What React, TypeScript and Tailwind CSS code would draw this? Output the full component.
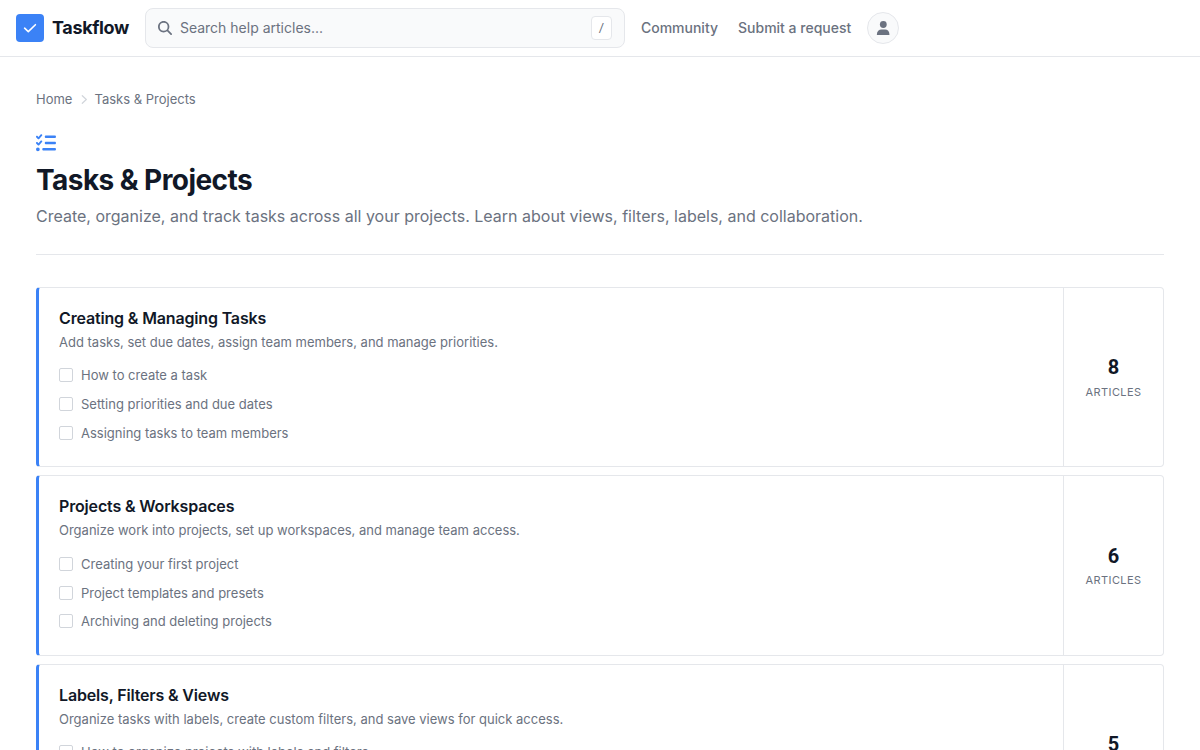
import { FaListCheck, FaMagnifyingGlass } from "react-icons/fa6";

const sections = [
  { title: "Creating & Managing Tasks", desc: "Add tasks, set due dates, assign team members, and manage priorities.", items: ["How to create a task", "Setting priorities and due dates", "Assigning tasks to team members"], count: 8 },
  { title: "Projects & Workspaces", desc: "Organize work into projects, set up workspaces, and manage team access.", items: ["Creating your first project", "Project templates and presets", "Archiving and deleting projects"], count: 6 },
  { title: "Labels, Filters & Views", desc: "Organize tasks with labels, create custom filters, and save views for quick access.", items: ["How to organize projects with labels and filters"], count: 5 },
];

export default function App() {
  return (
    <div className="h-[750px] overflow-hidden bg-white font-['Inter',sans-serif] text-[16px] text-[#111827]">
      <header className="flex h-[57px] items-center border-b border-[#e5e7eb] px-4">
        <a className="flex items-center gap-2">
          <span className="flex size-7 items-center justify-center rounded bg-[#3b82f6] text-white">
            <svg className="size-3.5" viewBox="0 0 14 14" fill="none" stroke="currentColor" strokeWidth="1.6" strokeLinecap="round" strokeLinejoin="round"><path d="M1.6 7.2 5.3 10.6 12.4 3.7" /></svg>
          </span>
          <span className="text-[18px] font-bold leading-[26px] tracking-[-0.36px]">Taskflow</span>
        </a>
        <div className="ml-4 flex h-10 w-[480px] items-center rounded-lg border border-[#e5e7eb] bg-[#f9fafb] px-3 text-[#6b7280]">
          <FaMagnifyingGlass className="size-3.5" />
          <span className="ml-2 flex-1 text-[14px] leading-5">Search help articles...</span>
          <span className="flex h-6 w-[21px] items-center justify-center rounded border border-[#e5e7eb] bg-white font-['Roboto',sans-serif] text-[13px]">/</span>
        </div>
        <nav className="ml-4 flex items-center gap-5 text-[14px] font-medium leading-5 text-[#6b7280]">
          <a>Community</a>
          <a>Submit a request</a>
        </nav>
        <span className="ml-4 flex size-8 items-center justify-center rounded-full border border-[#e5e7eb] bg-[#f9fafb] text-[#6b7280]">
          <svg className="size-3.5" viewBox="0 0 14 14" fill="currentColor"><circle cx="7.3" cy="3.5" r="3.4" /><path d="M.9 14v-.8C.9 10.5 3 8.6 5.5 8.6h3.6c2.5 0 4.3 1.9 4.3 4.6v.8Z" /></svg>
        </span>
      </header>
      <main className="px-9 pt-8">
        <div className="flex h-[21px] items-center text-[13px] text-[#6b7280]">
          <span className="leading-[21px]">Home</span>
          <svg className="ml-2 mr-1.5 h-[9px] w-2" viewBox="0 0 8 9" fill="none" stroke="#d1d5db" strokeWidth="1.2" strokeLinecap="round" strokeLinejoin="round"><path d="m2.3.7 4 3.8-4 3.8" /></svg>
          <span className="leading-[21px]">Tasks & Projects</span>
        </div>
        <div className="h-[145px] border-b border-[#e5e7eb] pt-[23.4px]">
          <FaListCheck className="size-5 text-[#3b82f6]" />
          <h1 className="mt-[8.6px] text-[28px] font-bold leading-[36px] tracking-[-0.56px]">Tasks & Projects</h1>
          <p className="mt-[5px] text-[16px] leading-[26px] text-[#6b7280]">Create, organize, and track tasks across all your projects. Learn about views, filters, labels, and collaboration.</p>
        </div>
        <div className="mt-8 flex flex-col gap-2">
          {sections.map((s) => (
            <section key={s.title} className="flex h-[180.4px] shrink-0 rounded border border-l-[3px] border-[#e5e7eb] border-l-[#3b82f6]">
              <div className="flex-1 px-5 pt-5">
                <h2 className="text-[16px] font-semibold leading-[21px] tracking-[-0.16px]">{s.title}</h2>
                <p className="mt-[3px] text-[13px] leading-5 text-[#6b7280]">{s.desc}</p>
                <ul className="mt-[9.7px] text-[13px] text-[#6b7280]">
                  {s.items.map((i) => (
                    <li key={i} className="flex h-[28.8px] items-center gap-2"><span className="mb-[1.2px] size-3.5 rounded-[2px] border border-[#d1d5db]" />{i}</li>
                  ))}
                </ul>
              </div>
              <div className="flex w-[100px] flex-col items-center justify-center border-l border-[#e5e7eb]">
                <span className="font-['Roboto',sans-serif] text-[20px] font-bold leading-[30px]">{s.count}</span>
                <span className="-mt-[0.3px] mb-[0.3px] text-[11px] uppercase leading-5 tracking-[0.44px] text-[#6b7280]">Articles</span>
              </div>
            </section>
          ))}
        </div>
      </main>
    </div>
  );
}
